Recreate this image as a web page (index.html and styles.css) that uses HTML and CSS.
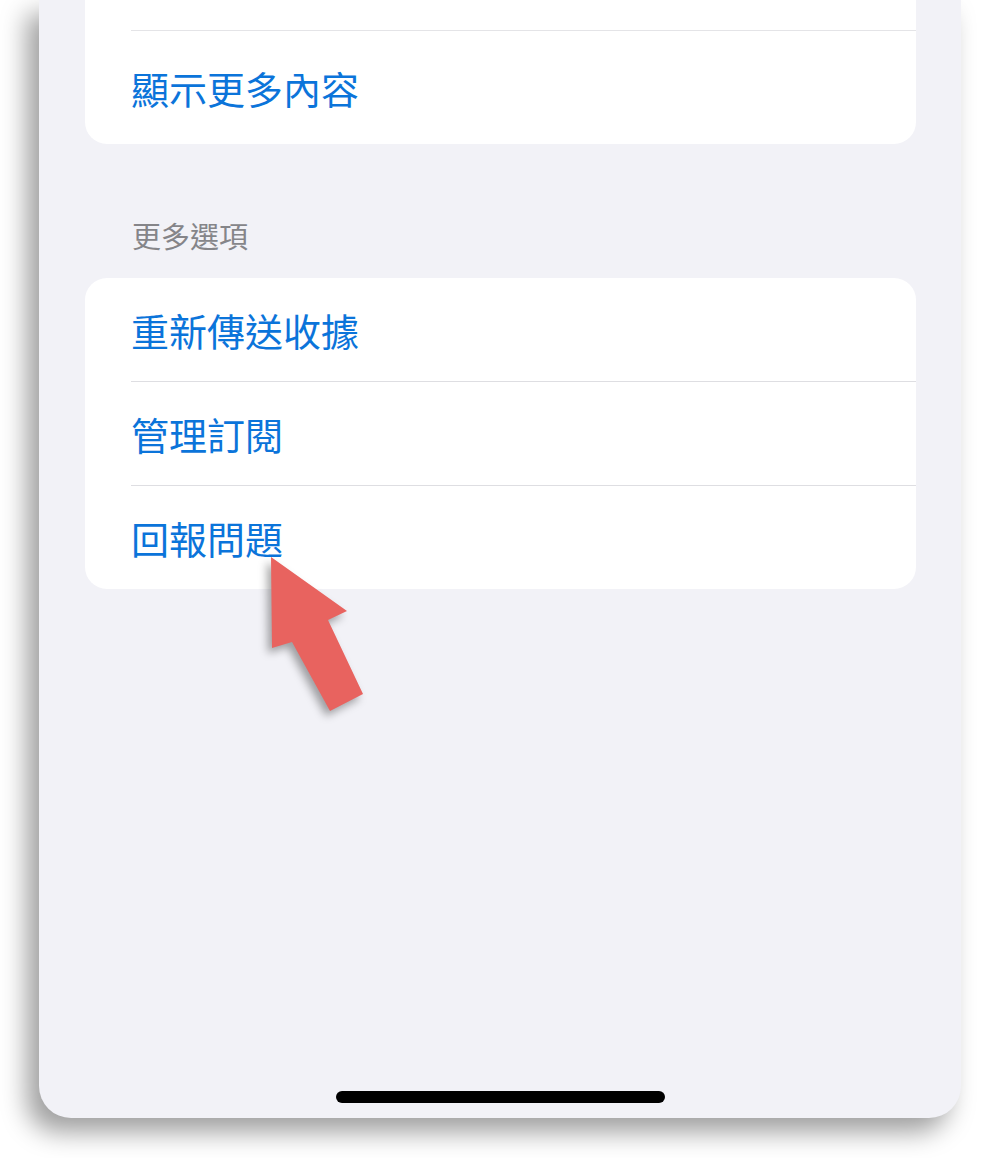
FILE: index.html
```html
<!DOCTYPE html>
<html lang="zh-Hant">
<head>
<meta charset="utf-8">
<title>更多選項</title>
<link rel="stylesheet" href="styles.css">
</head>
<body>
<div class="page">
  <div class="phone">
    <div class="content">
      <div class="card card-top">
        <div class="row row-partial"></div>
        <div class="row row-last"><span class="link">顯示更多內容</span></div>
      </div>
      <div class="section-header">更多選項</div>
      <div class="card card-full">
        <div class="row"><span class="link">重新傳送收據</span></div>
        <div class="row"><span class="link">管理訂閱</span></div>
        <div class="row"><span class="link">回報問題</span></div>
      </div>
    </div>
    <div class="home-indicator"></div>
  </div>
  <svg class="arrow" width="160" height="190" viewBox="0 0 160 190" aria-hidden="true">
    <polygon points="41,17 117,71 98,80 133,154 100,171 62,102 42,108" fill="#e8635f"/>
  </svg>
</div>
</body>
</html>
```

FILE: styles.css
```css
html, body {
  margin: 0;
  padding: 0;
  background: #ffffff;
}

body {
  font-family: "Noto Sans CJK TC", "Noto Sans CJK SC", "Noto Sans", sans-serif;
}

.page {
  position: relative;
  width: 999px;
  height: 1158px;
  overflow: hidden;
}

.phone {
  margin-left: 39px;
  width: 922px;
  height: 1118px;
  background: #f2f2f7;
  border-radius: 0 0 32px 32px;
  box-shadow: -12px 14px 26px rgba(0, 0, 0, 0.38);
  display: flex;
  flex-direction: column;
}

.content {
  flex: 1;
  padding: 0 45px 0 46px;
}

.card {
  background: #ffffff;
  border-radius: 22px;
  overflow: hidden;
}

.card-top {
  border-radius: 0 0 22px 22px;
}

.row {
  height: 103px;
  padding-left: 46px;
  display: flex;
  align-items: center;
  position: relative;
}

.row + .row::before {
  content: "";
  position: absolute;
  left: 46px;
  right: 0;
  top: -1px;
  height: 1px;
  background: #dedee2;
}

.card-full .row + .row {
  margin-top: 1px;
}

.card-top .row-partial {
  height: 30px;
}

.card-top .row-last {
  height: 113px;
  margin-top: 1px;
}

.card-top .row-last::before {
  background: #e4e4e7;
}

.link {
  font-size: 38px;
  line-height: 1;
  color: #0b74da;
  padding-top: 0;
}

.section-header {
  font-size: 29px;
  line-height: 40px;
  color: #858589;
  padding: 71px 0 23px 47px;
}

.home-indicator {
  align-self: center;
  width: 329px;
  height: 12px;
  border-radius: 6px;
  background: #000000;
  margin-bottom: 15px;
}

.arrow {
  position: absolute;
  left: 230px;
  top: 540px;
  filter: drop-shadow(-4px 5px 4px rgba(0, 0, 0, 0.35));
}
```
